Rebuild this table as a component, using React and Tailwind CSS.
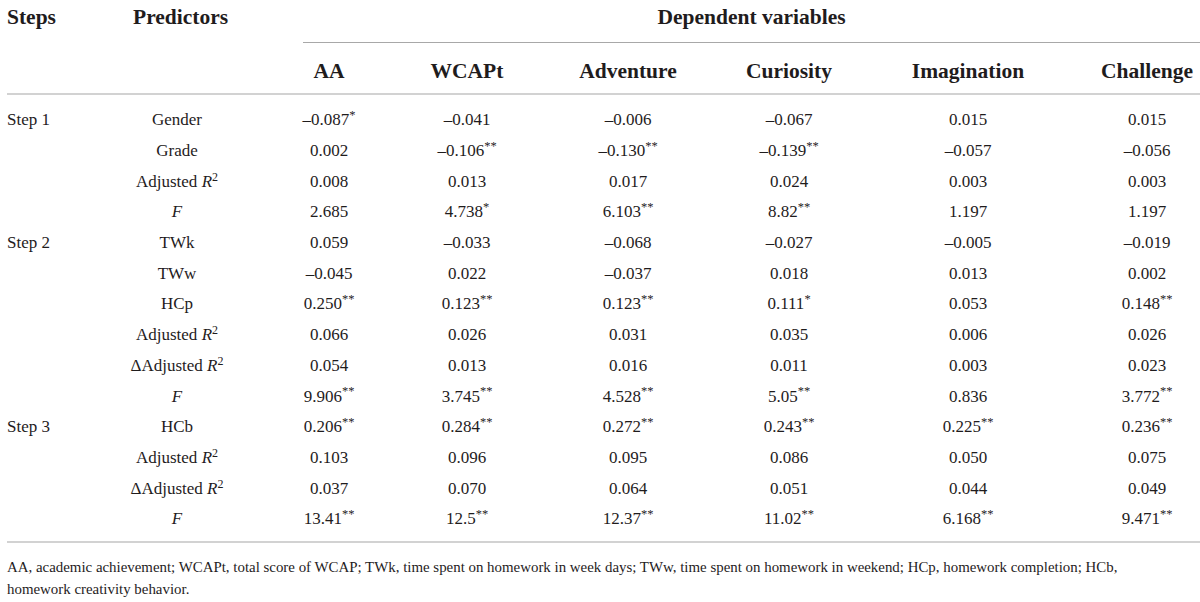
import React from "react";

const cols = "grid grid-cols-[103px_134px_170px_106px_216px_106px_252px_106px]";

const heads = ["AA", "WCAPt", "Adventure", "Curiosity", "Imagination", "Challenge"];

const AdjR = () => (
  <>
    Adjusted <i>R</i>
    <sup className="text-[12px]">2</sup>
  </>
);

const DAdjR = () => (
  <>
    ΔAdjusted <i>R</i>
    <sup className="text-[12px]">2</sup>
  </>
);

const F = () => <i>F</i>;

// values, "*" and "**" go in superscript
const rows = [
  { step: "Step 1", pred: "Gender", vals: ["–0.087*", "–0.041", "–0.006", "–0.067", "0.015", "0.015"] },
  { pred: "Grade", vals: ["0.002", "–0.106**", "–0.130**", "–0.139**", "–0.057", "–0.056"] },
  { pred: <AdjR />, vals: ["0.008", "0.013", "0.017", "0.024", "0.003", "0.003"] },
  { pred: <F />, vals: ["2.685", "4.738*", "6.103**", "8.82**", "1.197", "1.197"] },
  { step: "Step 2", pred: "TWk", vals: ["0.059", "–0.033", "–0.068", "–0.027", "–0.005", "–0.019"] },
  { pred: "TWw", vals: ["–0.045", "0.022", "–0.037", "0.018", "0.013", "0.002"] },
  { pred: "HCp", vals: ["0.250**", "0.123**", "0.123**", "0.111*", "0.053", "0.148**"] },
  { pred: <AdjR />, vals: ["0.066", "0.026", "0.031", "0.035", "0.006", "0.026"] },
  { pred: <DAdjR />, vals: ["0.054", "0.013", "0.016", "0.011", "0.003", "0.023"] },
  { pred: <F />, vals: ["9.906**", "3.745**", "4.528**", "5.05**", "0.836", "3.772**"] },
  { step: "Step 3", pred: "HCb", vals: ["0.206**", "0.284**", "0.272**", "0.243**", "0.225**", "0.236**"] },
  { pred: <AdjR />, vals: ["0.103", "0.096", "0.095", "0.086", "0.050", "0.075"] },
  { pred: <DAdjR />, vals: ["0.037", "0.070", "0.064", "0.051", "0.044", "0.049"] },
  { pred: <F />, vals: ["13.41**", "12.5**", "12.37**", "11.02**", "6.168**", "9.471**"] },
];

function Val({ v }) {
  const m = v.match(/^([^*]*)(\**)$/);
  return (
    <span>
      {m[1]}
      {m[2] && <sup className="text-[12.5px]">{m[2]}</sup>}
    </span>
  );
}

export default function App() {
  return (
    <div className="bg-white w-[1200px] h-[602px] overflow-hidden pl-[7px] text-[#1f1c1d] font-['Liberation_Serif',serif]">
      {/* header row 1 */}
      <div className={`${cols} h-[43px] text-[21.5px] font-bold`}>
        <div className="pt-[4px] leading-[26px]">Steps</div>
        <div className="pt-[4px] leading-[26px] pl-[23px]">Predictors</div>
        <div className="col-span-6 ml-[59px] border-b border-[#a8a8a8] pt-[4px] leading-[26px] text-center">
          Dependent variables
        </div>
      </div>

      {/* header row 2 */}
      <div className={`${cols} h-[52px] text-[21.5px] font-bold border-b-2 border-[#d2d2d2]`}>
        <div className="col-span-2" />
        {heads.map((h) => (
          <div key={h} className="pt-[15px] leading-[26px] text-center">
            {h}
          </div>
        ))}
      </div>

      {/* body */}
      <div className="pt-[10px] pb-[6px] border-b-2 border-[#d2d2d2] text-[17px]">
        {rows.map((r, i) => (
          <div key={i} className={`${cols} h-[30.7px] items-center leading-[20px]`}>
            <div>{r.step || ""}</div>
            <div className="text-center">{r.pred}</div>
            {r.vals.map((v, j) => (
              <div key={j} className="text-center">
                <Val v={v} />
              </div>
            ))}
          </div>
        ))}
      </div>

      {/* footnote */}
      <p className="pt-[13px] text-[14.9px] leading-[22px] whitespace-nowrap">
        AA, academic achievement; WCAPt, total score of WCAP; TWk, time spent on homework in week days; TWw,
        time spent on homework in weekend; HCp, homework completion; HCb,
        <br />
        homework creativity behavior.
      </p>
    </div>
  );
}
